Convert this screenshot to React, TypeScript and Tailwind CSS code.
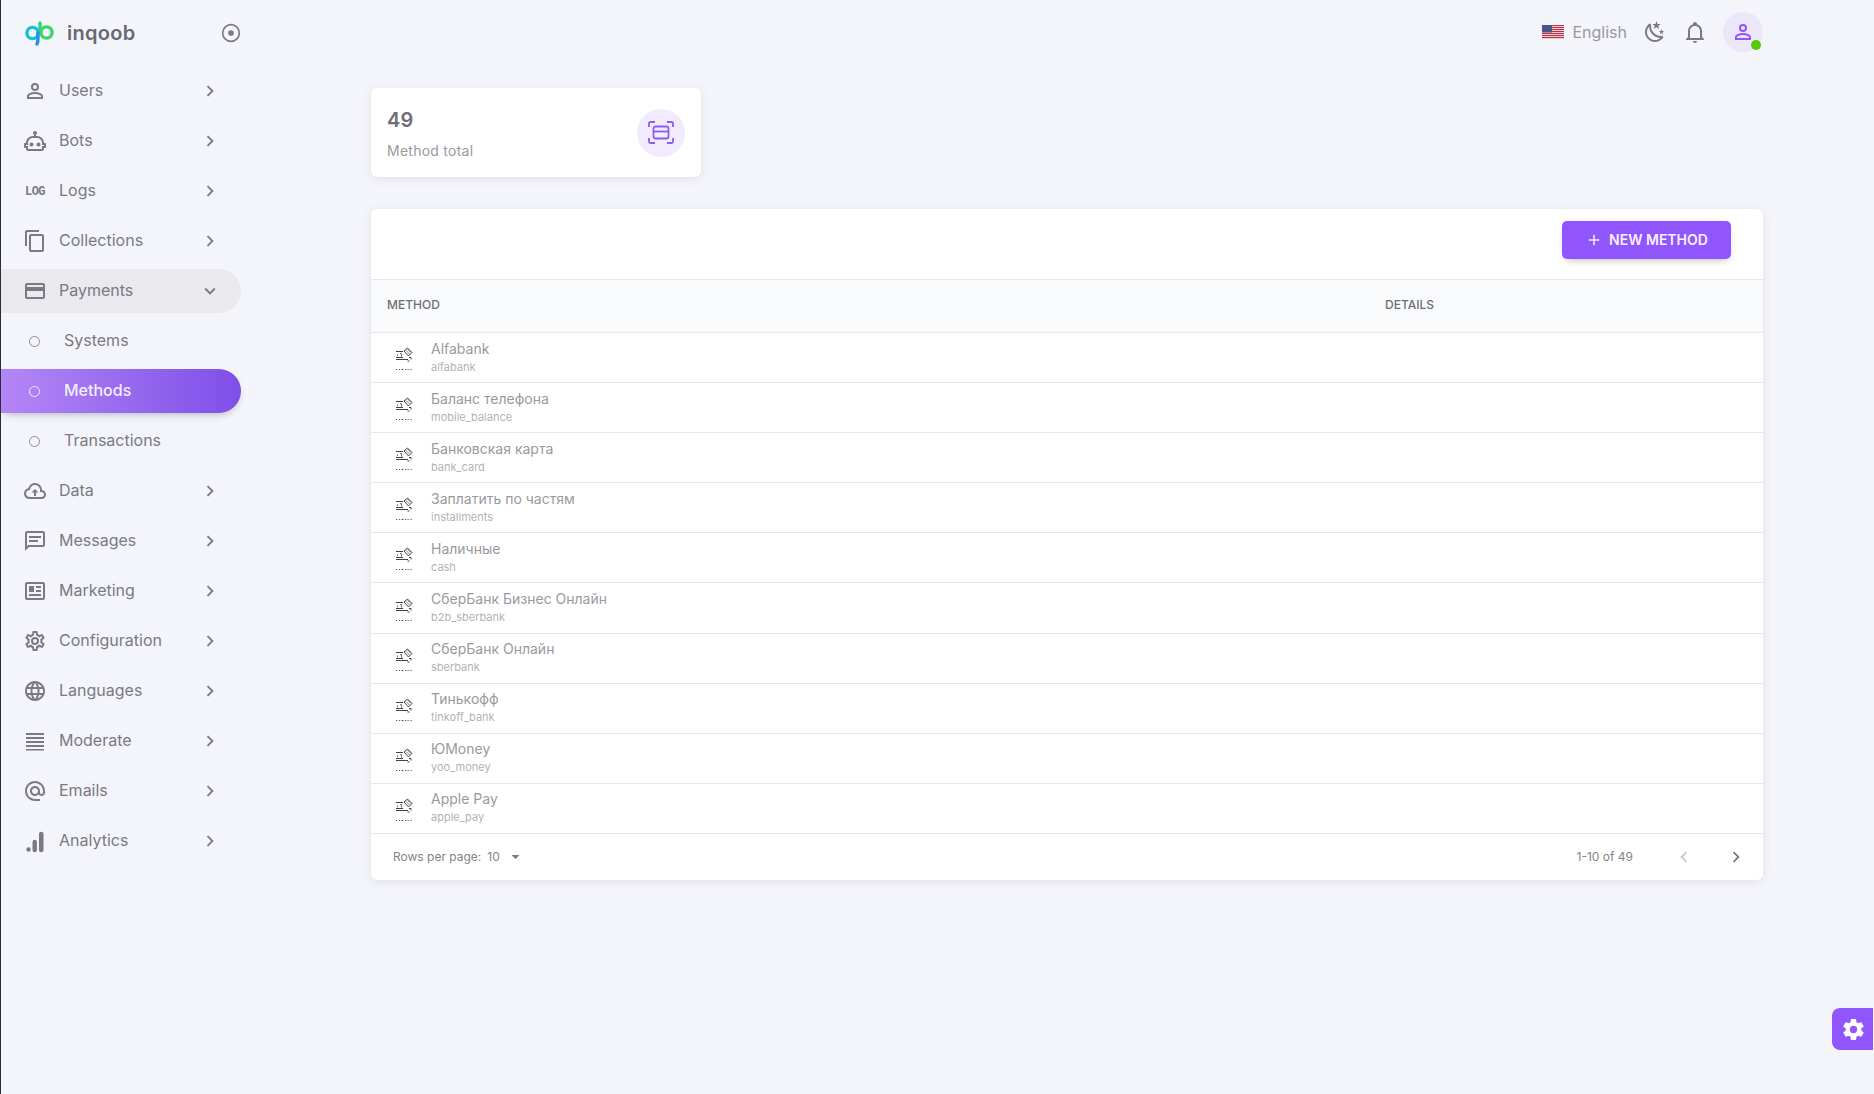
import { ReactNode } from "react";
import { MdAlternateEmail, MdLanguage } from "react-icons/md";

const ICONS: Record<string, string> = {
  users:
    "M12,4A4,4 0 0,1 16,8A4,4 0 0,1 12,12A4,4 0 0,1 8,8A4,4 0 0,1 12,4M12,6A2,2 0 0,0 10,8A2,2 0 0,0 12,10A2,2 0 0,0 14,8A2,2 0 0,0 12,6M12,13C14.67,13 20,14.33 20,17V20H4V17C4,14.33 9.33,13 12,13M12,14.9C9.03,14.9 5.9,16.36 5.9,17V18.1H18.1V17C18.1,16.36 14.97,14.9 12,14.9Z",
  bots:
    "M17.5 15.5C17.5 16.61 16.61 17.5 15.5 17.5S13.5 16.61 13.5 15.5 14.4 13.5 15.5 13.5 17.5 14.4 17.5 15.5M8.5 13.5C7.4 13.5 6.5 14.4 6.5 15.5S7.4 17.5 8.5 17.5 10.5 16.61 10.5 15.5 9.61 13.5 8.5 13.5M23 15V18C23 18.55 22.55 19 22 19H21V20C21 21.11 20.11 22 19 22H5C3.9 22 3 21.11 3 20V19H2C1.45 19 1 18.55 1 18V15C1 14.45 1.45 14 2 14H3C3 10.13 6.13 7 10 7H11V5.73C10.4 5.39 10 4.74 10 4C10 2.9 10.9 2 12 2S14 2.9 14 4C14 4.74 13.6 5.39 13 5.73V7H14C17.87 7 21 10.13 21 14H22C22.55 14 23 14.45 23 15M21 16H19V14C19 11.24 16.76 9 14 9H10C7.24 9 5 11.24 5 14V16H3V17H5V20H19V17H21V16Z",
  collections:
    "M19,21H8V7H19M19,5H8A2,2 0 0,0 6,7V21A2,2 0 0,0 8,23H19A2,2 0 0,0 21,21V7A2,2 0 0,0 19,5M16,1H4A2,2 0 0,0 2,3V17H4V3H16V1Z",
  payments:
    "M20,8H4V6H20M20,18H4V12H20M20,4H4C2.89,4 2,4.89 2,6V18A2,2 0 0,0 4,20H20A2,2 0 0,0 22,18V6C22,4.89 21.1,4 20,4Z",
  data: "M6.5 20Q4.22 20 2.61 18.43 1 16.85 1 14.58 1 12.63 2.17 11.1 3.35 9.57 5.25 9.15 5.88 6.85 7.75 5.43 9.63 4 12 4 14.93 4 16.96 6.04 19 8.07 19 11 20.73 11.2 21.86 12.5 23 13.78 23 15.5 23 17.38 21.69 18.69 20.38 20 18.5 20H6.5M6.5 18H18.5Q19.55 18 20.27 17.27 21 16.55 21 15.5 21 14.45 20.27 13.73 19.55 13 18.5 13H17V11Q17 8.93 15.54 7.46 14.08 6 12 6 9.93 6 8.46 7.46 7 8.93 7 11H6.5Q5.05 11 4.03 12.03 3 13.05 3 14.5 3 15.95 4.03 17 5.05 18 6.5 18M11 17V13.5H8.5L12 10L15.5 13.5H13V17H11Z",
  messages:
    "M20,2H4A2,2 0 0,0 2,4V22L6,18H20A2,2 0 0,0 22,16V4C22,2.89 21.1,2 20,2M20,16H5.17L4,17.17V4H20V16M6,7H18V9H6V7M6,11H15V13H6V11Z",
  marketing:
    "M20 3H4a2 2 0 0 0-2 2v14a2 2 0 0 0 2 2h16a2 2 0 0 0 2-2V5a2 2 0 0 0-2-2zm0 16H4V5h16v14zM6 7h5v6H6V7zm7 0h5v2h-5V7zm0 4h5v2h-5v-2zM6 15h12v2H6v-2z",
  config:
    "M12,8A4,4 0 0,1 16,12A4,4 0 0,1 12,16A4,4 0 0,1 8,12A4,4 0 0,1 12,8M12,10A2,2 0 0,0 10,12A2,2 0 0,0 12,14A2,2 0 0,0 14,12A2,2 0 0,0 12,10M10,22C9.75,22 9.54,21.82 9.5,21.58L9.13,18.93C8.5,18.68 7.96,18.34 7.44,17.94L4.95,18.95C4.73,19.03 4.46,18.95 4.34,18.73L2.34,15.27C2.21,15.05 2.27,14.78 2.46,14.63L4.57,12.97L4.5,12L4.57,11L2.46,9.37C2.27,9.22 2.21,8.95 2.34,8.73L4.34,5.27C4.46,5.05 4.73,4.96 4.95,5.05L7.44,6.05C7.96,5.66 8.5,5.32 9.13,5.07L9.5,2.42C9.54,2.18 9.75,2 10,2H14C14.25,2 14.46,2.18 14.5,2.42L14.87,5.07C15.5,5.32 16.04,5.66 16.56,6.05L19.05,5.05C19.27,4.96 19.54,5.05 19.66,5.27L21.66,8.73C21.79,8.95 21.73,9.22 21.54,9.37L19.43,11L19.5,12L19.43,13L21.54,14.63C21.73,14.78 21.79,15.05 21.66,15.27L19.66,18.73C19.54,18.95 19.27,19.04 19.05,18.95L16.56,17.95C16.04,18.34 15.5,18.68 14.87,18.93L14.5,21.58C14.46,21.82 14.25,22 14,22H10M11.25,4L10.88,6.61C9.68,6.86 8.62,7.5 7.85,8.39L5.44,7.35L4.69,8.65L6.8,10.2C6.4,11.37 6.4,12.64 6.8,13.8L4.68,15.36L5.43,16.66L7.86,15.62C8.63,16.5 9.68,17.14 10.87,17.38L11.24,20H12.76L13.13,17.39C14.32,17.14 15.37,16.5 16.14,15.62L18.57,16.66L19.32,15.36L17.2,13.81C17.6,12.64 17.6,11.37 17.2,10.2L19.31,8.65L18.56,7.35L16.15,8.39C15.38,7.5 14.32,6.86 13.12,6.62L12.75,4H11.25Z",
  moderate: "M3 4h18v2H3zM3 8h18v2H3zM3 12h18v2H3zM3 16h18v2H3zM3 20h18v1.6H3z",
  analytics:
    "M3.3 20.5a2.2 2.2 0 1 0 4.4 0a2.2 2.2 0 1 0-4.4 0zM9.5 13a2.2 2.2 0 0 1 4.4 0v8a2.2 2.2 0 0 1-4.4 0zM16 5a2.25 2.25 0 0 1 4.5 0v16a2.25 2.25 0 0 1-4.5 0z",
  moon: "M17.75,4.09L15.22,6.03L16.13,9.09L13.5,7.28L10.87,9.09L11.78,6.03L9.25,4.09L12.44,4L13.5,1L14.56,4L17.75,4.09M21.25,11L19.61,12.25L20.2,14.23L18.5,13.06L16.8,14.23L17.39,12.25L15.75,11L17.81,10.95L18.5,9L19.19,10.95L21.25,11M18.97,15.95C19.8,15.87 20.69,17.05 20.16,17.8C19.84,18.25 19.5,18.67 19.08,19.07C15.17,23 8.84,23 4.94,19.07C1.03,15.17 1.03,8.83 4.94,4.93C5.34,4.53 5.76,4.17 6.21,3.85C6.96,3.32 8.14,4.21 8.06,5.04C7.79,7.9 8.75,10.87 10.95,13.06C13.14,15.26 16.1,16.22 18.97,15.95M17.33,17.97C14.5,17.81 11.7,16.64 9.53,14.5C7.36,12.31 6.2,9.5 6.04,6.68C3.23,9.82 3.34,14.64 6.35,17.66C9.37,20.67 14.19,20.78 17.33,17.97Z",
  bell: "M10 21H14C14 22.1 13.1 23 12 23S10 22.1 10 21M21 19V20H3V19L5 17V11C5 7.9 7 5.2 10 4.3V4C10 2.9 10.9 2 12 2S14 2.9 14 4V4.3C17 5.2 19 7.9 19 11V17L21 19M17 11C17 8.2 14.8 6 12 6S7 8.2 7 11V18H17V11Z",
  right: "M8.59,16.58L13.17,12L8.59,7.41L10,6L16,12L10,18L8.59,16.58Z",
  left: "M15.41,16.58L10.83,12L15.41,7.41L14,6L8,12L14,18L15.41,16.58Z",
  down: "M7.41,8.58L12,13.17L16.59,8.58L18,10L12,16L6,10L7.41,8.58Z",
  plus: "M19,13H13V19H11V13H5V11H11V5H13V11H19V13Z",
  cog: "M12,15.5A3.5,3.5 0 0,1 8.5,12A3.5,3.5 0 0,1 12,8.5A3.5,3.5 0 0,1 15.5,12A3.5,3.5 0 0,1 12,15.5M19.43,12.97C19.47,12.65 19.5,12.33 19.5,12C19.5,11.67 19.47,11.34 19.43,11L21.54,9.37C21.73,9.22 21.78,8.95 21.66,8.73L19.66,5.27C19.54,5.05 19.27,4.96 19.05,5.05L16.56,6.05C16.04,5.66 15.5,5.32 14.87,5.07L14.5,2.42C14.46,2.18 14.25,2 14,2H10C9.75,2 9.54,2.18 9.5,2.42L9.13,5.07C8.5,5.32 7.96,5.66 7.44,6.05L4.95,5.05C4.73,4.96 4.46,5.05 4.34,5.27L2.34,8.73C2.21,8.95 2.27,9.22 2.46,9.37L4.57,11C4.53,11.34 4.5,11.67 4.5,12C4.5,12.33 4.53,12.65 4.57,12.97L2.46,14.63C2.27,14.78 2.21,15.05 2.34,15.27L4.34,18.73C4.46,18.95 4.73,19.03 4.95,18.95L7.44,17.94C7.96,18.34 8.5,18.68 9.13,18.93L9.5,21.58C9.54,21.82 9.75,22 10,22H14C14.25,22 14.46,21.82 14.5,21.58L14.87,18.93C15.5,18.67 16.04,18.34 16.56,17.94L19.05,18.95C19.27,19.03 19.54,18.95 19.66,18.73L21.66,15.27C21.78,15.05 21.73,14.78 21.54,14.63L19.43,12.97Z",
};

const Mdi = ({ name, className }: { name: string; className?: string }) => (
  <svg viewBox="0 0 24 24" fill="currentColor" className={className}>
    <path d={ICONS[name]} />
  </svg>
);

const Logo = () => (
  <svg viewBox="0 0 30 26" className="w-[30px] h-[26px]" fill="none" strokeWidth="3.4">
    <path d="M15 3 L15 12" stroke="#2fd17f" strokeLinecap="round" />
    <circle cx="21.5" cy="12.5" r="5.6" stroke="#38d66b" />
    <circle cx="7.5" cy="13" r="5.6" stroke="#17bfd8" />
    <path d="M13 13 C13 18 13.5 21 12 24" stroke="#2a8fe6" strokeLinecap="round" />
  </svg>
);

const UsFlag = () => (
  <svg viewBox="0 0 22 14" className="w-[22px] h-[14px]">
    <rect width="22" height="14" fill="#f4dcdc" />
    {[0, 2, 4, 6, 8, 10, 12].map((y) => (
      <rect key={y} y={y} width="22" height="1.1" fill="#b8334a" />
    ))}
    <rect width="10" height="7.5" fill="#4a5488" />
  </svg>
);

const ScanIcon = () => (
  <svg viewBox="0 0 26 23" className="w-[26px] h-[23px] text-[#8a5cf0]" fill="none" stroke="currentColor" strokeWidth="1.8">
    <path d="M1 6V2.4C1 1.6 1.6 1 2.4 1H7M19 1h4.6c.8 0 1.4.6 1.4 1.4V6M1 17v3.6c0 .8.6 1.4 1.4 1.4H7M19 22h4.6c.8 0 1.4-.6 1.4-1.4V17" />
    <rect x="5.5" y="5.5" width="15" height="12" rx="2" />
    <path d="M5.5 10.5h15" />
  </svg>
);

// the row thumbnails are a tiny, mostly broken looking bitmap in the reference
const MethodThumb = () => (
  <svg viewBox="0 0 34 34" className="w-[34px] h-[34px] shrink-0" fill="none" stroke="#2e2c33" strokeWidth="0.9">
    <g transform="translate(0 -2)">
      <path d="M9 13.5h7M9 19.5h7M9 21.5h12" />
      <path d="M11 16.5l-1 .8 1 .8M13 15.7h1.6v3" strokeWidth="0.7" />
      <path d="M17 13l3.5-3 4.5 4.5-3.5 3.5z" />
      <path d="M19 12.5l3.5 3.5M20.5 11l3.5 3.5" strokeWidth="0.6" />
      <path d="M22 19.5h2v2M20.5 23h2" />
    </g>
    <path d="M9 29.5h1.2M12 29.5h1M14.5 29.5h2M18 29.5h1.2M20.5 29.5h1.2M23.5 29.5h1.2" strokeWidth="0.8" />
  </svg>
);

type NavItemProps = {
  label: string;
  icon: ReactNode;
  open?: boolean;
};

const NavItem = ({ label, icon, open }: NavItemProps) => (
  <div
    className={`flex items-center h-[44px] pl-[22px] pr-[20px] rounded-r-[22px] text-[#7b7983] ${
      open ? "bg-[#e9e9ee]" : ""
    }`}
  >
    <div className="w-[24px] h-[24px] flex items-center justify-center shrink-0">{icon}</div>
    <span className="ml-[12px] flex-1 text-[16px] pb-[2px]">{label}</span>
    <Mdi name={open ? "down" : "right"} className="w-[22px] h-[22px] text-[#7b7983]" />
  </div>
);

const SubItem = ({ label, active }: { label: string; active?: boolean }) => (
  <div
    className={`flex items-center h-[44px] pl-[28px] rounded-r-[22px] ${
      active
        ? "bg-gradient-to-r from-[#b486f6] to-[#7f4ee8] text-[#f4ecff] font-medium shadow-[0_4px_8px_-4px_rgba(58,53,65,0.42)]"
        : "text-[#7b7983]"
    }`}
  >
    <span
      className={`w-[11px] h-[11px] rounded-full border-[1.5px] ${active ? "border-[#f4ecff]" : "border-[#8d8b93]"}`}
    />
    <span className="ml-[24px] text-[16px] pb-[2px]">{label}</span>
  </div>
);

const METHODS = [
  ["Alfabank", "alfabank"],
  ["Баланс телефона", "mobile_balance"],
  ["Банковская карта", "bank_card"],
  ["Заплатить по частям", "installments"],
  ["Наличные", "cash"],
  ["СберБанк Бизнес Онлайн", "b2b_sberbank"],
  ["СберБанк Онлайн", "sberbank"],
  ["Тинькофф", "tinkoff_bank"],
  ["ЮMoney", "yoo_money"],
  ["Apple Pay", "apple_pay"],
];

const navIcon = "w-[24px] h-[24px]";

const App = () => {
  return (
    <div className="relative flex h-screen overflow-hidden bg-[#f4f5fa] border-l border-l-[#2b2b3a] font-['Inter',sans-serif]">
      <aside className="w-[240px] shrink-0">
        <div className="flex items-center h-[66px] pl-[24px]">
          <Logo />
          <span className="ml-[12px] flex-1 text-[20px] font-semibold text-[#6a6870] tracking-[0.3px]">inqoob</span>
          <svg viewBox="0 0 24 24" className="w-[20px] h-[20px] text-[#7b7983]" fill="none" stroke="currentColor" strokeWidth="2">
            <circle cx="12" cy="12" r="10" />
            <circle cx="12" cy="12" r="3.4" fill="currentColor" stroke="none" />
          </svg>
        </div>
        <nav className="mt-[3px] flex flex-col gap-[6px]">
          <NavItem label="Users" icon={<Mdi name="users" className={navIcon} />} />
          <NavItem label="Bots" icon={<Mdi name="bots" className={navIcon} />} />
          <NavItem
            label="Logs"
            icon={<span className="pt-[2px] font-['Liberation_Mono',monospace] text-[12px] font-bold tracking-[-0.6px]">LOG</span>}
          />
          <NavItem label="Collections" icon={<Mdi name="collections" className={navIcon} />} />
          <NavItem label="Payments" open icon={<Mdi name="payments" className={navIcon} />} />
          <SubItem label="Systems" />
          <SubItem label="Methods" active />
          <SubItem label="Transactions" />
          <NavItem label="Data" icon={<Mdi name="data" className={navIcon} />} />
          <NavItem label="Messages" icon={<Mdi name="messages" className={navIcon} />} />
          <NavItem label="Marketing" icon={<Mdi name="marketing" className={navIcon} />} />
          <NavItem label="Configuration" icon={<Mdi name="config" className={navIcon} />} />
          <NavItem label="Languages" icon={<MdLanguage className={navIcon} />} />
          <NavItem label="Moderate" icon={<Mdi name="moderate" className={navIcon} />} />
          <NavItem label="Emails" icon={<MdAlternateEmail className={navIcon} />} />
          <NavItem label="Analytics" icon={<Mdi name="analytics" className={navIcon} />} />
        </nav>
      </aside>

      <main className="flex-1 pl-[130px] pr-[111px]">
        <header className="flex items-center justify-end h-[64px] text-[#7b7983]">
          <UsFlag />
          <span className="ml-[8px] text-[16px] text-[#9a99a0]">English</span>
          <Mdi name="moon" className="ml-[16px] w-[24px] h-[24px]" />
          <Mdi name="bell" className="ml-[16px] w-[24px] h-[24px]" />
          <div className="relative ml-[16px] w-[40px] h-[40px] rounded-full bg-[#ece6f9] flex items-center justify-center">
            <Mdi name="users" className="w-[24px] h-[24px] text-[#9155fd]" />
            <span className="absolute right-[2px] bottom-[2px] w-[10px] h-[10px] rounded-full bg-[#56ca00]" />
          </div>
        </header>

        <section className="mt-[24px] w-[330px] h-[89px] bg-white rounded-md shadow-[0_2px_10px_0_rgba(58,53,65,0.1)] flex items-center justify-between pl-[16px] pr-[16px]">
          <div>
            <div className="text-[20px] font-semibold leading-[30px] text-[#6f6d75] tracking-[0.3px]">49</div>
            <div className="mt-[6px] text-[14px] leading-[20px] text-[#9a99a0] tracking-[0.25px]">Method total</div>
          </div>
          <div className="w-[48px] h-[48px] rounded-full bg-[#f2ebfe] flex items-center justify-center">
            <ScanIcon />
          </div>
        </section>

        <section className="mt-[32px] bg-white rounded-md shadow-[0_2px_10px_0_rgba(58,53,65,0.1)]">
          <div className="flex items-start justify-end h-[71px] pt-[12px] pr-[32px] border-b border-[#e8e8ea]">
            <button className="flex items-center justify-center w-[169px] h-[38px] pb-[1px] rounded-[5px] bg-[#9155fd] text-[#f6f0ff] text-[14px] font-semibold shadow-[0_4px_8px_-4px_rgba(58,53,65,0.42)]">
              <Mdi name="plus" className="w-[18px] h-[18px] mr-[6px]" />
              NEW METHOD
            </button>
          </div>

          <div className="grid grid-cols-[998px_1fr] items-center h-[53px] pb-[2px] bg-[#f9fafc] border-b border-[#e8e8ea] text-[12px] font-medium text-[#6f6d75]">
            <div className="pl-[16px]">METHOD</div>
            <div className="pl-[16px]">DETAILS</div>
          </div>

          {METHODS.map(([name, code]) => (
            <div key={code} className="flex items-center h-[50.1px] pb-[1px] pl-[16px] border-b border-[#e8e8ea]">
              <MethodThumb />
              <div className="ml-[10px]">
                <div className="text-[14px] leading-[19px] text-[#9a99a0]">{name}</div>
                <div className="mt-[1px] text-[11px] leading-[17px] text-[#b3b2b7]">{code}</div>
              </div>
            </div>
          ))}

          <div className="flex items-center h-[46px] pl-[22px] text-[12px] text-[#85838b]">
            <span>Rows per page:</span>
            <span className="ml-[6px]">10</span>
            <svg viewBox="0 0 10 5" className="ml-[11px] mt-[1px] w-[9px] h-[4px]" fill="#7b7983">
              <path d="M0 0h10L5 5z" />
            </svg>
            <span className="ml-auto">1-10 of 49</span>
            <Mdi name="left" className="ml-[40px] w-[22px] h-[22px] text-[#c9c8cc]" />
            <Mdi name="right" className="ml-[30px] mr-[16px] w-[22px] h-[22px] text-[#7b7983]" />
          </div>
        </section>
      </main>

      <button className="absolute right-[1px] top-[1008px] w-[41px] h-[42px] pl-[1px] rounded-l-[8px] bg-[#9155fd] flex items-center justify-center">
        <Mdi name="cog" className="w-[25px] h-[25px] text-white" />
      </button>
    </div>
  );
};

export default App;
